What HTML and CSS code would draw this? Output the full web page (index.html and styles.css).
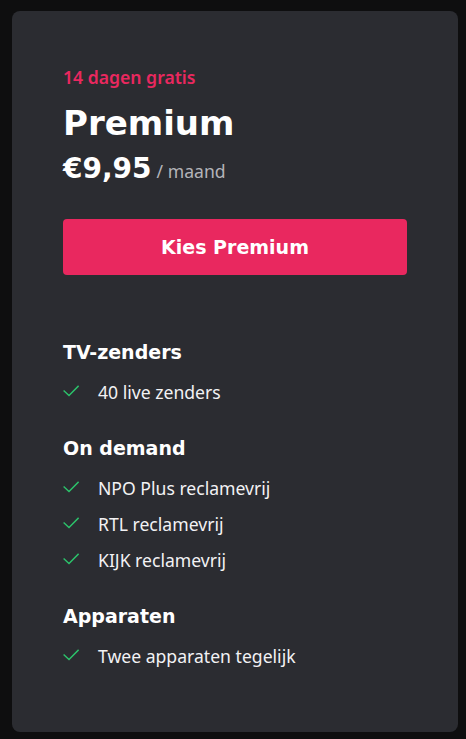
FILE: index.html
```html
<!DOCTYPE html>
<html lang="nl">
<head>
    <meta charset="utf-8">
    <title>Premium abonnement</title>
    <meta name="viewport" content="width=device-width, initial-scale=1">
    <link rel="stylesheet" href="styles.css">
</head>
<body>

    <div class="planCard">
        <p class="planTag">14 dagen gratis</p>
        <h1 class="planTitle">Premium</h1>
        <div class="planPrice">
            <span class="priceValue">€9,95</span>
            <span class="pricePeriod">/ maand</span>
        </div>

        <button class="planButton">Kies Premium</button>

        <div class="featureGroup">
            <h2 class="featureTitle">TV-zenders</h2>
            <ul class="featureList">
                <li class="featureItem">
                    <svg class="checkIcon" viewBox="0 0 16 12"><path d="M0.6 5.6 L6 10.6 L15.6 0.8"/></svg>
                    40 live zenders
                </li>
            </ul>
        </div>

        <div class="featureGroup">
            <h2 class="featureTitle">On demand</h2>
            <ul class="featureList">
                <li class="featureItem">
                    <svg class="checkIcon" viewBox="0 0 16 12"><path d="M0.6 5.6 L6 10.6 L15.6 0.8"/></svg>
                    NPO Plus reclamevrij
                </li>
                <li class="featureItem">
                    <svg class="checkIcon" viewBox="0 0 16 12"><path d="M0.6 5.6 L6 10.6 L15.6 0.8"/></svg>
                    RTL reclamevrij
                </li>
                <li class="featureItem">
                    <svg class="checkIcon" viewBox="0 0 16 12"><path d="M0.6 5.6 L6 10.6 L15.6 0.8"/></svg>
                    KIJK reclamevrij
                </li>
            </ul>
        </div>

        <div class="featureGroup">
            <h2 class="featureTitle">Apparaten</h2>
            <ul class="featureList">
                <li class="featureItem">
                    <svg class="checkIcon" viewBox="0 0 16 12"><path d="M0.6 5.6 L6 10.6 L15.6 0.8"/></svg>
                    Twee apparaten tegelijk
                </li>
            </ul>
        </div>
    </div>

</body>
</html>
```

FILE: styles.css
```css
body {
    margin: 0px;
    padding: 11px 8px 7px 12px;
    background-color: #0e0e0f;
    font-family: "Noto Sans", "Open Sans", sans-serif;
    color: #ffffff;
}

p, h1, h2, ul {
    margin: 0px;
    padding: 0px;
}

.planCard {
    display: flex;
    flex-direction: column;
    background-color: #2b2c31;
    border-radius: 8px;
    padding: 54px 51px 64px 51px;
}

.planTag {
    font-size: 17.6px;
    line-height: 24px;
    font-weight: 600;
    color: #e9285f;
}

.planTitle {
    margin-top: 14px;
    font-family: "DejaVu Sans", sans-serif;
    font-size: 34px;
    line-height: 40px;
    font-weight: bold;
}

.planPrice {
    display: flex;
    align-items: baseline;
    gap: 5px;
    margin-top: 9px;
}

.priceValue {
    font-family: "DejaVu Sans", sans-serif;
    font-size: 28px;
    line-height: 34px;
    font-weight: bold;
}

.pricePeriod {
    font-size: 17.6px;
    color: #b4b4b9;
}

.planButton {
    margin-top: 33px;
    height: 56px;
    border: none;
    border-radius: 4px;
    background-color: #e9285f;
    color: #ffffff;
    font-family: "DejaVu Sans", sans-serif;
    font-size: 19px;
    font-weight: bold;
    cursor: pointer;
}

.featureGroup {
    margin-top: 32px;
}

.planButton + .featureGroup {
    margin-top: 65px;
}

.featureTitle {
    font-family: "DejaVu Sans", sans-serif;
    font-size: 19px;
    line-height: 24px;
    font-weight: bold;
    margin-bottom: 16px;
}

.featureList {
    list-style: none;
    display: flex;
    flex-direction: column;
    gap: 12px;
}

.featureItem {
    display: flex;
    align-items: center;
    gap: 19px;
    font-size: 17.6px;
    line-height: 24px;
    color: #f2f2f4;
}

.checkIcon {
    width: 16px;
    height: 12px;
    flex-shrink: 0;
    margin-top: -2px;
}

.checkIcon path {
    fill: none;
    stroke: #2cc36b;
    stroke-width: 1.4;
}
```
